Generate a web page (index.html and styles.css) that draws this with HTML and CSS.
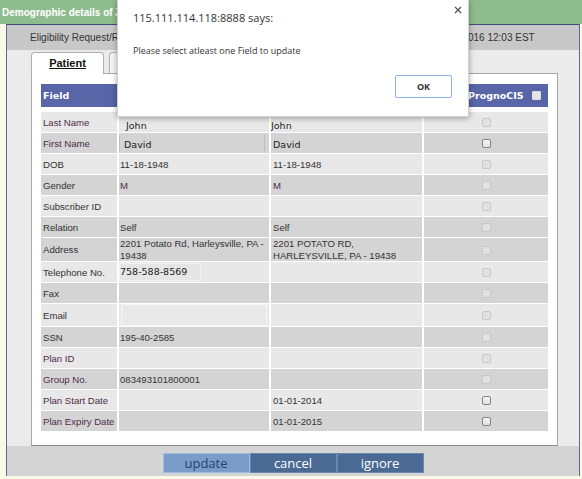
FILE: index.html
```html
<!DOCTYPE html>
<html>
<head>
<meta charset="utf-8">
<title>Demographic details</title>
<link rel="stylesheet" href="styles.css">
</head>
<body>
<div class="titlebar">Demographic details of Zimmerman, John David</div>
<div class="frame">
  <div class="elig">Eligibility Request/Response for Zimmerman, John David - Medicare Part B. - Received on 06-14-2016 12:03 EST</div>
  <div class="content">
    <div class="tabs">
      <div class="tab active"><u>Patient</u></div>
      <div class="tab">Insurance</div>
    </div>
    <div class="panel">
      <table class="grid">
        <colgroup><col class="w1"><col class="w2"><col class="w3"><col class="w4"></colgroup>
        <thead>
          <tr><th>Field</th><th>Eligibility Response</th><th>PrognoCIS Data</th><th class="hc4">Update PrognoCIS<span class="cb hdr"></span></th></tr>
        </thead>
        <tbody>
          <tr class="l"><td class="lbl p">Last Name</td><td class="iv"><span class="t in2">John</span></td><td class="iv c3z"><span class="t">John</span></td><td class="ck"><span class="cb"></span></td></tr>
          <tr class="d"><td class="lbl p">First Name</td><td class="bx"><span class="box fn">David</span></td><td class="iv c3b"><span class="t">David</span></td><td class="ck"><span class="cb on"></span></td></tr>
          <tr class="l"><td class="lbl">DOB</td><td class="v">11-18-1948</td><td class="v c3">11-18-1948</td><td class="ck"><span class="cb"></span></td></tr>
          <tr class="d"><td class="lbl">Gender</td><td class="v p">M</td><td class="v c3 p">M</td><td class="ck"><span class="cb"></span></td></tr>
          <tr class="l"><td class="lbl">Subscriber ID</td><td class="v"></td><td class="v c3"></td><td class="ck"><span class="cb"></span></td></tr>
          <tr class="d"><td class="lbl">Relation</td><td class="v">Self</td><td class="v c3">Self</td><td class="ck"><span class="cb"></span></td></tr>
          <tr class="d tall"><td class="lbl">Address</td><td class="v ml">2201 Potato Rd, Harleysville, PA - 19438</td><td class="v c3 ml">2201 POTATO RD, HARLEYSVILLE, PA - 19438</td><td class="ck"><span class="cb"></span></td></tr>
          <tr class="l"><td class="lbl">Telephone No.</td><td class="bx"><span class="box tel">758-588-8569</span></td><td class="v c3"></td><td class="ck"><span class="cb"></span></td></tr>
          <tr class="d"><td class="lbl">Fax</td><td class="v"></td><td class="v c3"></td><td class="ck"><span class="cb"></span></td></tr>
          <tr class="l"><td class="lbl">Email</td><td class="bx em"><span class="box mail"></span></td><td class="v c3"></td><td class="ck"><span class="cb"></span></td></tr>
          <tr class="d"><td class="lbl">SSN</td><td class="v">195-40-2585</td><td class="v c3"></td><td class="ck"><span class="cb"></span></td></tr>
          <tr class="l"><td class="lbl p">Plan ID</td><td class="v"></td><td class="v c3"></td><td class="ck"><span class="cb"></span></td></tr>
          <tr class="d"><td class="lbl p">Group No.</td><td class="v">083493101800001</td><td class="v c3"></td><td class="ck"><span class="cb"></span></td></tr>
          <tr class="l"><td class="lbl p">Plan Start Date</td><td class="v"></td><td class="v c3">01-01-2014</td><td class="ck"><span class="cb on"></span></td></tr>
          <tr class="d"><td class="lbl p">Plan Expiry Date</td><td class="v"></td><td class="v c3">01-01-2015</td><td class="ck"><span class="cb on"></span></td></tr>
        </tbody>
      </table>
    </div>
  </div>
  <div class="footer">
    <button class="btn upd">update</button><button class="btn">cancel</button><button class="btn">ignore</button>
  </div>
</div>

<div class="dialog">
  <div class="dlg-title">115.111.114.118:8888 says:</div>
  <div class="dlg-msg">Please select atleast one Field to update</div>
  <div class="dlg-actions"><button class="ok">OK</button></div>
  <svg class="dlg-close" width="8" height="8" viewBox="0 0 8 8"><path d="M1 1L7 7M7 1L1 7" stroke="#555" stroke-width="1.3" fill="none"/></svg>
</div>
</body>
</html>
```
FILE: styles.css
```css
* { box-sizing: border-box; }
html, body { margin: 0; padding: 0; }
body {
  width: 582px;
  height: 479px;
  overflow: hidden;
  position: relative;
  background: #fafae8;
  font-family: "Liberation Sans", Arial, sans-serif;
}
.titlebar {
  height: 24px;
  background: #8fbc8f;
  color: #fff;
  font-weight: bold;
  font-size: 10px;
  line-height: 26px;
  padding-left: 2px;
  white-space: nowrap;
  overflow: hidden;
}
.frame {
  margin: 0 2px 0 6px;
  border-top: 1px solid #3e4c7c;
  border-left: 1px solid #5b6b98;
  border-right: 1px solid #5b6b98;
}
.elig {
  height: 25px;
  background: #c8c8c8;
  color: #333;
  font-size: 10px;
  line-height: 25px;
  padding-left: 23px;
  white-space: nowrap;
  overflow: hidden;
}
.content {
  background: #ebebeb;
  padding: 2px 21px 0 24px;
}
.tabs {
  display: flex;
  align-items: flex-start;
  gap: 5px;
  height: 22px;
  border-bottom: 1px solid #a8a8a8;
}
.tab {
  width: 73px;
  height: 21px;
  border: 1px solid #b0b0b0;
  border-bottom: none;
  border-radius: 4px 4px 0 0;
  background: #f6f6f6;
  color: #111;
  font-size: 11px;
  font-weight: bold;
  line-height: 21px;
  text-align: center;
}
.tab.active {
  height: 22px;
  margin-bottom: -1px;
  background: #fff;
}
.panel {
  background: #fff;
  border: 1px solid #a8a8a8;
  border-top: none;
  border-bottom-color: #8a8a8a;
  padding: 9px 7px 13px 7px;
}
.grid {
  border-collapse: separate;
  border-spacing: 2px 1px;
  width: 511px;
  table-layout: fixed;
  font-size: 9.6px;
}
.w1 { width: 76px; }
.w2 { width: 150px; }
.w3 { width: 151px; }
.w4 { width: 124px; }
.grid th {
  background: #5865a6;
  color: #fff;
  font-family: "DejaVu Sans", Verdana, sans-serif;
  font-weight: bold;
  font-size: 9.5px;
  text-align: left;
  height: 27px;
  padding: 0 2px;
  border-bottom: 4px solid #fff;
  white-space: nowrap;
  overflow: hidden;
}
.grid th.hc4 { text-align: right; padding-right: 9px; }
.grid td {
  height: 20px;
  padding: 0 2px;
  color: #333;
  vertical-align: middle;
  white-space: nowrap;
  overflow: hidden;
}
.grid tr.l td { background: #e8e8e8; }
.grid tr.d td { background: #d4d4d4; }
.grid tr.tall td { height: 22px; }
.grid td.lbl { padding-left: 2px; }
.grid td.p, .grid .lbl.p { color: #4e2c4a; }
.grid td.v { padding-left: 1px; }
.grid td.c3 { padding-left: 2px; }
.grid td.ml { white-space: normal; line-height: 11.5px; }
.grid td.iv { vertical-align: bottom; padding: 0; }
.grid td.c3b { padding: 0 0 2px 2px; }
.grid td.c3z { padding: 0; }
.t {
  display: block;
  font-family: "DejaVu Sans", Verdana, sans-serif;
  font-size: 9.5px;
  line-height: 12px;
  color: #222;
}
.t.in2 { padding-left: 7px; }
.grid td.bx { vertical-align: top; padding: 2px 0 0 0; }
.box {
  display: block;
  font-family: "DejaVu Sans", Verdana, sans-serif;
  font-size: 9.5px;
  line-height: 12px;
  color: #222;
}
.box.fn {
  width: 146px;
  height: 16px;
  padding: 4px 0 0 4px;
  border-left: 1px solid #bdbdbd;
  border-right: 1px solid #bdbdbd;
}
.box.tel {
  width: 82px;
  height: 18px;
  margin-top: -1px;
  padding: 2px 0 0 0;
  border: 1px solid #f2f2f2;
  background: #e6e6e6;
}
.grid td.bx.em { padding: 0 0 0 2px; height: 22px; }
.box.mail {
  width: 146px;
  height: 22px;
  border: 1px solid #f6f6f6;
  background: #e9e9e9;
}
.grid td.ck { text-align: center; padding: 0; }
.cb {
  display: inline-block;
  width: 9px;
  height: 9px;
  border: 1px solid #c8c8c8;
  background: #e2e2e2;
  border-radius: 2px;
  vertical-align: middle;
}
.cb.on {
  border-color: #858585;
  background: linear-gradient(#f6f6f6, #e0e0e0);
}
.cb.hdr {
  margin-left: 8px;
  border-color: #dcdcdc;
  background: #e4e4e4;
  border-radius: 1px;
  vertical-align: -1px;
}
.footer {
  height: 30px;
  background: #d4d4d4;
  display: flex;
  justify-content: center;
  align-items: flex-start;
  padding-top: 7px;
}
.btn {
  width: 87px;
  height: 20px;
  margin: 0;
  padding: 0;
  border: 1px solid #6a86ac;
  background: #4a6a94;
  color: #fff;
  font-family: "Open Sans", sans-serif;
  font-size: 13px;
  line-height: 16px;
}
.btn.upd {
  background: #7b9cc9;
  border-color: #9cbcea;
  color: #24426e;
}
.dialog {
  position: absolute;
  left: 117px;
  top: 0;
  width: 352px;
  height: 117px;
  padding: 10px 16px 0 15px;
  background: #fff;
  border: 1px solid rgba(0,0,0,0.18);
  border-top: none;
  box-shadow: 0 1px 6px rgba(0,0,0,0.35);
  font-family: "Open Sans", sans-serif;
  color: #333;
}
.dlg-title { font-size: 11px; line-height: 15px; }
.dlg-msg { margin-top: 20px; font-size: 9px; line-height: 12px; }
.dlg-actions { display: flex; justify-content: flex-end; margin-top: 18px; }
.ok {
  width: 57px;
  height: 23px;
  margin: 0;
  padding: 0;
  border: 1px solid #8db2ee;
  border-radius: 2px;
  background: #fff;
  font-family: "Open Sans", sans-serif;
  font-weight: bold;
  font-size: 9px;
  color: #333;
}
.dlg-close { position: absolute; left: 336px; top: 6px; }
```
